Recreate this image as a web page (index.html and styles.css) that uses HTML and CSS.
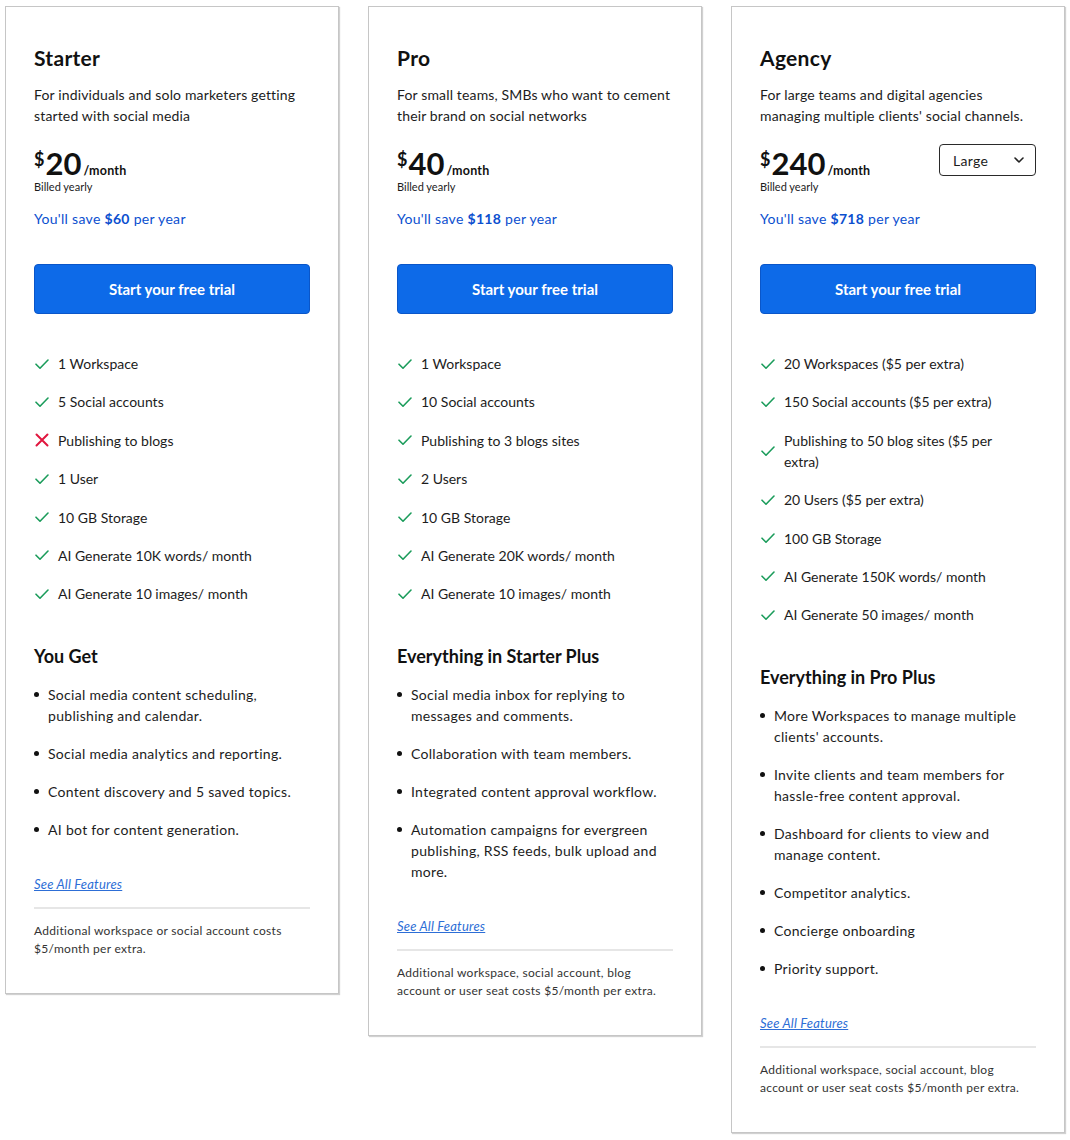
FILE: index.html
```html
<!DOCTYPE html>
<html lang="en">
<head>
  <meta charset="UTF-8">
  <title>Pricing</title>
  <link rel="stylesheet" href="styles.css">
</head>
<body>
<div class="plans">

  <!-- Starter -->
  <div class="card">
    <h2 class="plan-name">Starter</h2>
    <p class="plan-desc">For individuals and solo marketers getting started with social media</p>
    <div class="price-row">
      <div class="price">
        <div class="amount"><span class="cur">$</span><span class="num">20</span><span class="per">/month</span></div>
        <div class="billed">Billed yearly</div>
      </div>
    </div>
    <p class="save">You'll save <b>$60</b> per year</p>
    <a class="btn" href="#">Start your free trial</a>
    <ul class="features">
      <li><svg class="ic" viewBox="0 0 14 14"><path class="ok" d="M1 7.2l4 4L13 3"/></svg><span>1 Workspace</span></li>
      <li><svg class="ic" viewBox="0 0 14 14"><path class="ok" d="M1 7.2l4 4L13 3"/></svg><span>5 Social accounts</span></li>
      <li><svg class="ic" viewBox="0 0 14 14"><path class="bad" d="M1.5 1.5l11 11M12.5 1.5l-11 11"/></svg><span>Publishing to blogs</span></li>
      <li><svg class="ic" viewBox="0 0 14 14"><path class="ok" d="M1 7.2l4 4L13 3"/></svg><span>1 User</span></li>
      <li><svg class="ic" viewBox="0 0 14 14"><path class="ok" d="M1 7.2l4 4L13 3"/></svg><span>10 GB Storage</span></li>
      <li><svg class="ic" viewBox="0 0 14 14"><path class="ok" d="M1 7.2l4 4L13 3"/></svg><span>AI Generate 10K words/ month</span></li>
      <li><svg class="ic" viewBox="0 0 14 14"><path class="ok" d="M1 7.2l4 4L13 3"/></svg><span>AI Generate 10 images/ month</span></li>
    </ul>
    <h3 class="get-title">You Get</h3>
    <ul class="bullets">
      <li>Social media content scheduling, publishing and calendar.</li>
      <li>Social media analytics and reporting.</li>
      <li>Content discovery and 5 saved topics.</li>
      <li>AI bot for content generation.</li>
    </ul>
    <a class="all-link" href="#">See All Features</a>
    <p class="note">Additional workspace or social account costs $5/month per extra.</p>
  </div>

  <!-- Pro -->
  <div class="card">
    <h2 class="plan-name">Pro</h2>
    <p class="plan-desc">For small teams, SMBs who want to cement their brand on social networks</p>
    <div class="price-row">
      <div class="price">
        <div class="amount"><span class="cur">$</span><span class="num">40</span><span class="per">/month</span></div>
        <div class="billed">Billed yearly</div>
      </div>
    </div>
    <p class="save">You'll save <b>$118</b> per year</p>
    <a class="btn" href="#">Start your free trial</a>
    <ul class="features">
      <li><svg class="ic" viewBox="0 0 14 14"><path class="ok" d="M1 7.2l4 4L13 3"/></svg><span>1 Workspace</span></li>
      <li><svg class="ic" viewBox="0 0 14 14"><path class="ok" d="M1 7.2l4 4L13 3"/></svg><span>10 Social accounts</span></li>
      <li><svg class="ic" viewBox="0 0 14 14"><path class="ok" d="M1 7.2l4 4L13 3"/></svg><span>Publishing to 3 blogs sites</span></li>
      <li><svg class="ic" viewBox="0 0 14 14"><path class="ok" d="M1 7.2l4 4L13 3"/></svg><span>2 Users</span></li>
      <li><svg class="ic" viewBox="0 0 14 14"><path class="ok" d="M1 7.2l4 4L13 3"/></svg><span>10 GB Storage</span></li>
      <li><svg class="ic" viewBox="0 0 14 14"><path class="ok" d="M1 7.2l4 4L13 3"/></svg><span>AI Generate 20K words/ month</span></li>
      <li><svg class="ic" viewBox="0 0 14 14"><path class="ok" d="M1 7.2l4 4L13 3"/></svg><span>AI Generate 10 images/ month</span></li>
    </ul>
    <h3 class="get-title">Everything in Starter Plus</h3>
    <ul class="bullets">
      <li>Social media inbox for replying to messages and comments.</li>
      <li>Collaboration with team members.</li>
      <li>Integrated content approval workflow.</li>
      <li>Automation campaigns for evergreen publishing, RSS feeds, bulk upload and more.</li>
    </ul>
    <a class="all-link" href="#">See All Features</a>
    <p class="note">Additional workspace, social account, blog account or user seat costs $5/month per extra.</p>
  </div>

  <!-- Agency -->
  <div class="card">
    <h2 class="plan-name">Agency</h2>
    <p class="plan-desc">For large teams and digital agencies managing multiple clients' social channels.</p>
    <div class="price-row">
      <div class="price">
        <div class="amount"><span class="cur">$</span><span class="num">240</span><span class="per">/month</span></div>
        <div class="billed">Billed yearly</div>
      </div>
      <div class="size-select">
        <span>Large</span>
        <svg width="10" height="6" viewBox="0 0 10 6"><path d="M1 1l4 4 4-4" fill="none" stroke="#222" stroke-width="1.6" stroke-linecap="round" stroke-linejoin="round"/></svg>
      </div>
    </div>
    <p class="save">You'll save <b>$718</b> per year</p>
    <a class="btn" href="#">Start your free trial</a>
    <ul class="features">
      <li><svg class="ic" viewBox="0 0 14 14"><path class="ok" d="M1 7.2l4 4L13 3"/></svg><span>20 Workspaces ($5 per extra)</span></li>
      <li><svg class="ic" viewBox="0 0 14 14"><path class="ok" d="M1 7.2l4 4L13 3"/></svg><span>150 Social accounts ($5 per extra)</span></li>
      <li><svg class="ic" viewBox="0 0 14 14"><path class="ok" d="M1 7.2l4 4L13 3"/></svg><span>Publishing to 50 blog sites ($5 per extra)</span></li>
      <li><svg class="ic" viewBox="0 0 14 14"><path class="ok" d="M1 7.2l4 4L13 3"/></svg><span>20 Users ($5 per extra)</span></li>
      <li><svg class="ic" viewBox="0 0 14 14"><path class="ok" d="M1 7.2l4 4L13 3"/></svg><span>100 GB Storage</span></li>
      <li><svg class="ic" viewBox="0 0 14 14"><path class="ok" d="M1 7.2l4 4L13 3"/></svg><span>AI Generate 150K words/ month</span></li>
      <li><svg class="ic" viewBox="0 0 14 14"><path class="ok" d="M1 7.2l4 4L13 3"/></svg><span>AI Generate 50 images/ month</span></li>
    </ul>
    <h3 class="get-title">Everything in Pro Plus</h3>
    <ul class="bullets">
      <li>More Workspaces to manage multiple clients' accounts.</li>
      <li>Invite clients and team members for hassle-free content approval.</li>
      <li>Dashboard for clients to view and manage content.</li>
      <li>Competitor analytics.</li>
      <li>Concierge onboarding</li>
      <li>Priority support.</li>
    </ul>
    <a class="all-link" href="#">See All Features</a>
    <p class="note">Additional workspace, social account, blog account or user seat costs $5/month per extra.</p>
  </div>

</div>
</body>
</html>
```

FILE: styles.css
```css
body {
  margin: 0;
  background: #fff;
  font-family: Lato, "Open Sans", sans-serif;
  color: #1c1c1c;
}
.plans {
  display: flex;
  align-items: flex-start;
  gap: 29px;
  padding: 6px 5px;
}
.card {
  width: 334px;
  box-sizing: border-box;
  border: 1px solid #c6c6c6;
  box-shadow: 1px 1px 1px rgba(0, 0, 0, 0.18);
  padding: 39px 28px 35px;
  display: flex;
  flex-direction: column;
}
.plan-name {
  margin: 0;
  font-size: 21px;
  line-height: 24px;
  font-weight: 700;
  letter-spacing: 0.3px;
  color: #111;
}
.plan-desc {
  margin: 14px 0 0;
  font-size: 14px;
  line-height: 21px;
  letter-spacing: 0.15px;
}
.price-row {
  margin-top: 20px;
  display: flex;
  justify-content: space-between;
  align-items: flex-start;
}
.amount {
  height: 34px;
  font-size: 31px;
  line-height: 34px;
  font-weight: 700;
  color: #111;
  white-space: nowrap;
}
.amount span {
  line-height: 1;
}
.cur {
  font-size: 18px;
  vertical-align: 9px;
  margin-right: 1px;
}
.per {
  font-size: 12.5px;
  margin-left: 2px;
  letter-spacing: 0.2px;
}
.billed {
  font-size: 11px;
  line-height: 12px;
  margin-top: 1px;
}
.size-select {
  width: 97px;
  height: 32px;
  box-sizing: border-box;
  border: 1px solid #2a2a2a;
  border-radius: 4px;
  display: flex;
  align-items: center;
  justify-content: space-between;
  padding: 0 11px 0 13px;
  font-size: 14px;
  letter-spacing: 0.3px;
  margin-top: -2px;
}
.save {
  margin: 16px 0 0;
  font-size: 14px;
  line-height: 20px;
  letter-spacing: 0.3px;
  color: #0b4fcf;
}
.btn {
  margin-top: 35px;
  height: 50px;
  box-sizing: border-box;
  border: 1px solid #0a56c9;
  border-radius: 4px;
  background: #0d6ae8;
  color: #fff;
  font-size: 15px;
  font-weight: 700;
  text-decoration: none;
  display: flex;
  align-items: center;
  justify-content: center;
}
.features {
  list-style: none;
  margin: 39px 0 0;
  padding: 0;
  display: flex;
  flex-direction: column;
  gap: 17.4px;
}
.features li {
  display: flex;
  align-items: center;
  gap: 9px;
  padding: 0 10px 0 1px;
  font-size: 14px;
  line-height: 21px;
}
.ic {
  width: 14px;
  height: 14px;
  flex-shrink: 0;
}
.ic path {
  fill: none;
  stroke-linecap: round;
  stroke-linejoin: round;
}
.ic .ok {
  stroke: #1b9c5b;
  stroke-width: 1.6;
}
.ic .bad {
  stroke: #e0173f;
  stroke-width: 2;
}
.get-title {
  margin: 41px 0 0;
  font-size: 18px;
  line-height: 22px;
  font-weight: 700;
  color: #111;
}
.bullets {
  list-style: none;
  margin: 17px 0 0;
  padding: 0;
  display: flex;
  flex-direction: column;
  gap: 17px;
}
.bullets li {
  position: relative;
  padding-left: 14px;
  font-size: 14px;
  line-height: 21px;
  letter-spacing: 0.3px;
}
.bullets li::before {
  content: "";
  position: absolute;
  left: 0;
  top: 8px;
  width: 5px;
  height: 5px;
  border-radius: 50%;
  background: #111;
}
.all-link {
  margin-top: 36px;
  padding-bottom: 15px;
  border-bottom: 2px solid #e6e6e6;
  font-size: 13px;
  line-height: 16px;
  letter-spacing: 0.2px;
  font-style: italic;
  color: #2d6ed6;
  text-decoration: underline;
}
.note {
  margin: 13px 0 0;
  font-size: 12px;
  line-height: 18px;
  letter-spacing: 0.3px;
  color: #333;
}
```
